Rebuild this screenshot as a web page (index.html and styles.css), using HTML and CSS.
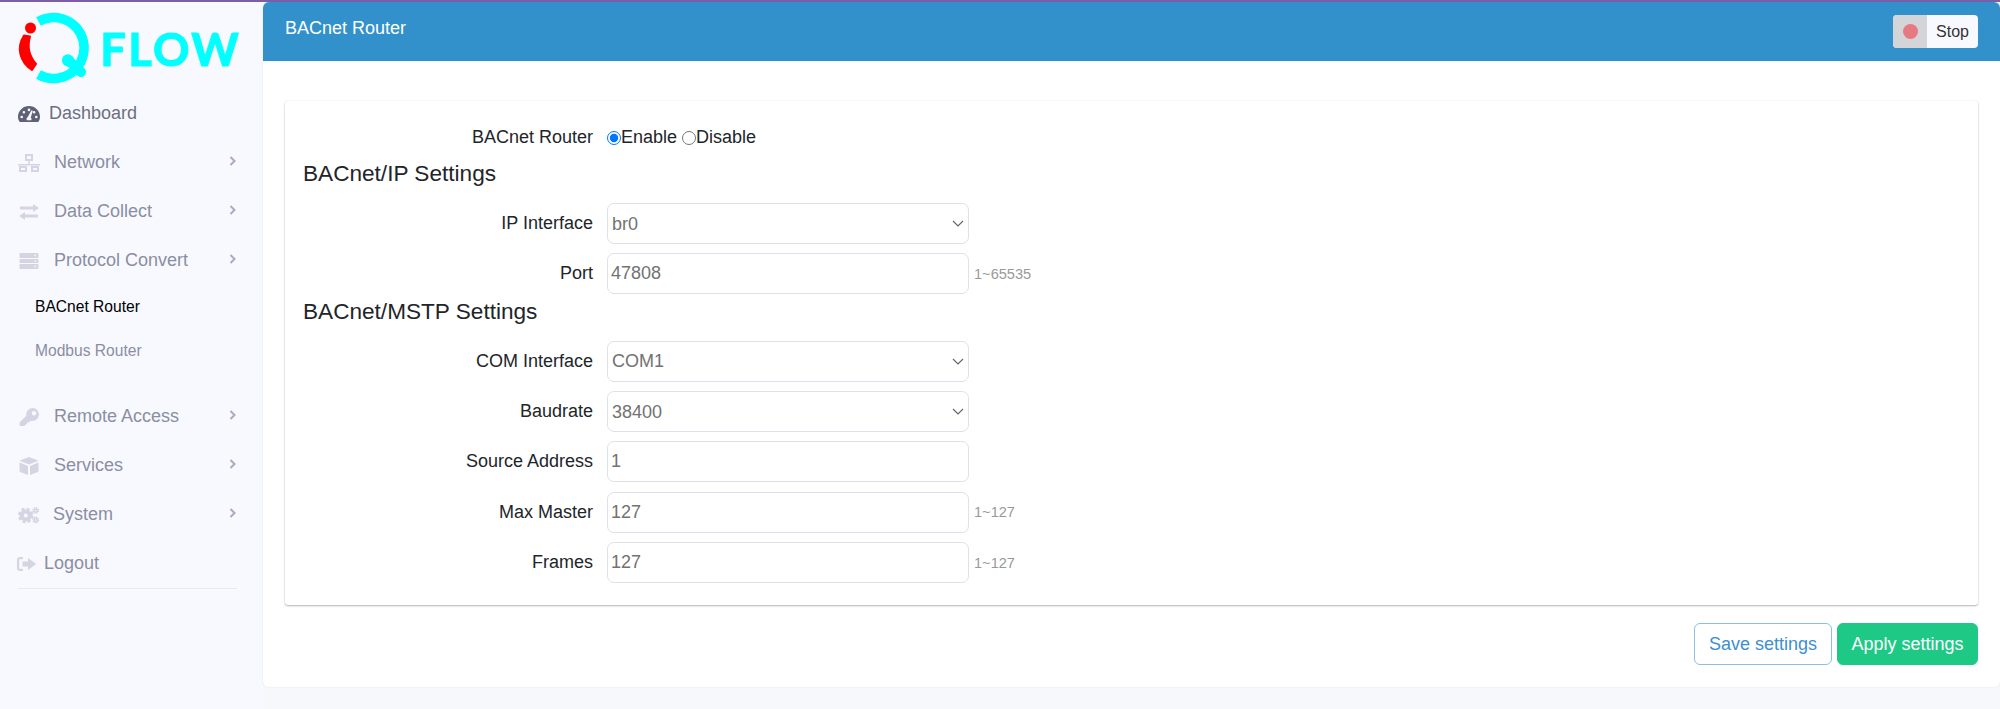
FILE: index.html
```html
<!DOCTYPE html>
<html lang="en">
<head>
<meta charset="utf-8">
<title>BACnet Router</title>
<link rel="stylesheet" href="styles.css">
</head>
<body>
<div class="app">
  <aside class="sidebar">
    <div class="logo">
      <svg width="250" height="87" viewBox="0 0 250 87" class="logo-svg">
        <path class="q" d="M38.500 19.500 A 30.500 30.500 0 1 1 38.500 72.500"/>
        <path class="q-tail" d="M67.500 57.500 L81 70"/>
        <circle class="q-knob" cx="68" cy="58.500" r="6"/>
        <path class="i-arc" d="M24 33.500 C 16 46 20 60 32 68 L 36 62 C 29 54 27 45 30 34.500 Z"/>
        <circle class="i-dot" cx="30.500" cy="26" r="5.500"/>
        <text class="flow" x="100" y="63.500">FLOW</text>
      </svg>
    </div>
    <nav class="nav">
      <a class="nav-item nav-dash">
        <svg class="ic ic-dash" viewBox="0 0 22 16"><path fill-rule="evenodd" d="M11 0C5 0 0 4.800 0 10.800c0 1.700.5 3.300 1.300 4.700.2.300.5.500.9.500h17.600c.4 0 .7-.2.900-.5.800-1.400 1.300-3 1.300-4.700C22 4.800 17 0 11 0zm0 2.600a1.300 1.300 0 1 1 0 2.600 1.300 1.300 0 0 1 0-2.600zM3.700 12.300a1.300 1.300 0 1 1 0-2.600 1.300 1.300 0 0 1 0 2.600zm2.200-4.800a1.300 1.300 0 1 1 0-2.600 1.300 1.300 0 0 1 0 2.600zm7.300 6.800H8.800a2.500 2.500 0 0 1 .9-3.300l3.500-6.200a.8.800 0 0 1 1.400.8l-1.800 5.800c.7.600 1 1.900.4 2.900zm2.900-6.800a1.300 1.300 0 1 1 0-2.600 1.300 1.300 0 0 1 0 2.600zm2.200 4.800a1.300 1.300 0 1 1 0-2.600 1.300 1.300 0 0 1 0 2.600z"/></svg>
        <span>Dashboard</span>
      </a>
      <a class="nav-item">
        <svg class="ic" viewBox="0 0 22 18"><path fill-rule="evenodd" d="M7 0h8v7H7zM9 2v3h4V2zM10.300 7h1.400v3H22v1.400H0V10h10.300zM1 12h8v6H1zM3 14v2h4v-2zM13 12h8v6h-8zM15 14v2h4v-2z"/></svg>
        <span class="label">Network</span>
        <svg class="chev" viewBox="0 0 8 10"><path d="M1.500 1l4 4-4 4"/></svg>
      </a>
      <a class="nav-item">
        <svg class="ic" viewBox="0 0 22 18"><path d="M2 3.500h13V1l6 4-6 4V6.500H2zM20 11.500H7V9l-6 4 6 4v-2.500h13z"/></svg>
        <span class="label">Data Collect</span>
        <svg class="chev" viewBox="0 0 8 10"><path d="M1.500 1l4 4-4 4"/></svg>
      </a>
      <a class="nav-item">
        <svg class="ic" viewBox="0 0 22 18"><path fill-rule="evenodd" d="M2.500 1h17a1 1 0 0 1 1 1v3a1 1 0 0 1-1 1h-17a1 1 0 0 1-1-1V2a1 1 0 0 1 1-1zm14 1.800v1.400h1.500V2.800zM2.500 7h17a1 1 0 0 1 1 1v2a1 1 0 0 1-1 1h-17a1 1 0 0 1-1-1V8a1 1 0 0 1 1-1zm14 1.300v1.400h1.500V8.300zM2.500 12h17a1 1 0 0 1 1 1v3a1 1 0 0 1-1 1h-17a1 1 0 0 1-1-1v-3a1 1 0 0 1 1-1zm14 1.800v1.400h1.500v-1.400z"/></svg>
        <span class="label">Protocol Convert</span>
        <svg class="chev" viewBox="0 0 8 10"><path d="M1.500 1l4 4-4 4"/></svg>
      </a>
      <div class="sub">
        <a class="sub-item active">BACnet Router</a>
        <a class="sub-item">Modbus Router</a>
      </div>
      <a class="nav-item">
        <svg class="ic" viewBox="0 0 22 18"><path fill-rule="evenodd" d="M14.500 0a6.500 6.500 0 1 1-2 12.700L11 14.500H9V16.500H7v1.500H2.500a1 1 0 0 1-1-1v-2.500L8.300 7.700A6.500 6.500 0 0 1 14.500 0zm1.500 3a2.200 2.200 0 1 0 0 4.400A2.200 2.200 0 0 0 16 3z"/></svg>
        <span class="label">Remote Access</span>
        <svg class="chev" viewBox="0 0 8 10"><path d="M1.500 1l4 4-4 4"/></svg>
      </a>
      <a class="nav-item">
        <svg class="ic" viewBox="0 0 22 18"><path d="M11 0l8.500 3.300a1 1 0 0 1 .5.600L11 7.500 2 3.900a1 1 0 0 1 .5-.6zM1.500 5.500l8.500 3.500v9L2.200 15a1 1 0 0 1-.7-.9zM20.500 5.500v8.600a1 1 0 0 1-.7.9L12 18V9z"/></svg>
        <span class="label">Services</span>
        <svg class="chev" viewBox="0 0 8 10"><path d="M1.500 1l4 4-4 4"/></svg>
      </a>
      <a class="nav-item">
        <svg class="ic ic-wide" viewBox="0 0 24 20"><circle class="gear-core" cx="9" cy="10.500" r="4.500"/><circle class="gear" cx="9" cy="10.500" r="7.200"/><circle class="gear-s-core" cx="20" cy="5" r="1.800"/><circle class="gear-s" cx="20" cy="5" r="3.100"/><circle class="gear-s-core" cx="20" cy="15.500" r="1.800"/><circle class="gear-s" cx="20" cy="15.500" r="3.100"/></svg>
        <span class="label">System</span>
        <svg class="chev" viewBox="0 0 8 10"><path d="M1.500 1l4 4-4 4"/></svg>
      </a>
      <a class="nav-item nav-logout">
        <svg class="ic ic-out" viewBox="0 0 19 16"><path d="M6 1v2.300H3a.8.800 0 0 0-.8.800v7.800c0 .4.400.8.800.8h3V15H3a3 3 0 0 1-3-3V4a3 3 0 0 1 3-3zM11 2l7.500 5.400a.8.800 0 0 1 0 1.200L11 14v-3.500H5.500v-5H11z"/></svg>
        <span>Logout</span>
      </a>
    </nav>
    <div class="nav-rule"></div>
  </aside>

  <main class="panel">
    <header class="topbar">
      <h1 class="title">BACnet Router</h1>
      <button class="stop" type="button">
        <span class="stop-light"><span class="dot"></span></span>
        <span class="stop-text">Stop</span>
      </button>
    </header>
    <div class="content">
      <form class="card">
        <div class="row row-radio">
          <label class="lbl">BACnet Router</label>
          <div class="radios">
            <label class="radio"><input type="radio" name="r" checked>Enable</label>
            <label class="radio"><input type="radio" name="r">Disable</label>
          </div>
        </div>
        <h2 class="section s1">BACnet/IP Settings</h2>
        <div class="row">
          <label class="lbl">IP Interface</label>
          <select class="field"><option>br0</option></select>
        </div>
        <div class="row">
          <label class="lbl">Port</label>
          <input class="field" value="47808">
          <span class="hint">1~65535</span>
        </div>
        <h2 class="section s2">BACnet/MSTP Settings</h2>
        <div class="row">
          <label class="lbl">COM Interface</label>
          <select class="field"><option>COM1</option></select>
        </div>
        <div class="row">
          <label class="lbl">Baudrate</label>
          <select class="field"><option>38400</option></select>
        </div>
        <div class="row">
          <label class="lbl">Source Address</label>
          <input class="field" value="1">
        </div>
        <div class="row">
          <label class="lbl">Max Master</label>
          <input class="field" value="127">
          <span class="hint">1~127</span>
        </div>
        <div class="row">
          <label class="lbl">Frames</label>
          <input class="field" value="127">
          <span class="hint">1~127</span>
        </div>
      </form>
      <div class="actions">
        <button class="btn btn-save" type="button">Save settings</button>
        <button class="btn btn-apply" type="button">Apply settings</button>
      </div>
    </div>
  </main>
</div>
</body>
</html>
```
FILE: styles.css
```css
* { box-sizing: border-box; }
html, body { margin: 0; height: 100%; }
body {
  font-family: "Liberation Sans", Arial, sans-serif;
  font-size: 18px;
  color: #212529;
  background: #f7f8fc;
  border-top: 2px solid #7b5ea7;
  overflow: hidden;
}
.app { display: flex; height: 707px; }

.sidebar { width: 263px; flex: none; padding-left: 18px; background: #f8f9fe; }
.logo { height: 87px; margin-left: -18px; }
.logo-svg { display: block; }
.q { fill: none; stroke: #00ffff; stroke-width: 9.500; }
.q-tail { stroke: #00ffff; stroke-width: 10; stroke-linecap: round; }
.q-knob { fill: #00ffff; }
.i-arc { fill: #ff0000; stroke: #ff0000; stroke-width: 2; stroke-linejoin: round; }
.i-dot { fill: #ff0000; }
.flow {
  font-family: "Lato", sans-serif;
  font-weight: 700;
  font-size: 45px;
  letter-spacing: 2.500px;
  fill: #00ffff;
  stroke: #00ffff;
  stroke-width: 1.200px;
  stroke-linejoin: round;
}

.nav { display: flex; flex-direction: column; }
.nav-item {
  display: flex;
  align-items: center;
  height: 49px;
  color: #8a8ea3;
  width: 219px;
}
.ic { width: 22px; height: 18px; flex: none; fill: #d3d5e3; margin-right: 14px; }
.ic-wide { width: 23px; margin-right: 13px; margin-left: -1px; }
.gear-core { fill: none; stroke: #d3d5e3; stroke-width: 4.500; }
.gear { fill: none; stroke: #d3d5e3; stroke-width: 3; stroke-dasharray: 3.400 2.250; }
.gear-s-core { fill: none; stroke: #d3d5e3; stroke-width: 1.800; }
.gear-s { fill: none; stroke: #d3d5e3; stroke-width: 1.500; stroke-dasharray: 1.400 1.030; }
.label { flex: 1; }
.chev { width: 8px; height: 10px; fill: none; stroke: #a9abc0; stroke-width: 2; margin-top: -4px; }
.nav-dash { color: #6b6f82; }
.ic-dash { fill: #5f6274; height: 16px; margin-right: 9px; margin-left: 0; }
.ic-out { width: 19px; height: 16px; margin-right: 8px; margin-left: -1px; }
.sub { display: flex; flex-direction: column; padding: 0 0 19px 17px; }
.sub-item { height: 44px; line-height: 44px; font-size: 15.600px; color: #8a8ea3; }
.active { color: #000; }
.nav-rule { width: 219px; border-top: 1px solid #e8e9f1; }

.panel {
  flex: 1;
  height: 685px;
  background: #fff;
  border-radius: 6px;
  box-shadow: 0 0 2px #e0e3ec;
  display: flex;
  flex-direction: column;
}
.topbar {
  height: 59px;
  flex: none;
  background: #3291cb;
  border-bottom: 1px solid #2b8fd3;
  border-radius: 6px 6px 0 0;
  padding: 13px 22px 0;
  display: flex;
  justify-content: space-between;
  align-items: flex-start;
}
.title { margin: 0; font-weight: 400; font-size: 18px; line-height: 27px; color: #fff; }
.stop {
  display: flex;
  height: 33px;
  width: 85px;
  padding: 0;
  border: 0;
  border-radius: 4px;
  overflow: hidden;
  background: #f8f9fe;
  font: 16px "Liberation Sans", Arial, sans-serif;
  color: #333;
}
.stop-light { width: 34px; height: 100%; background: #d3d5d8; display: flex; align-items: center; justify-content: center; }
.dot { width: 15px; height: 15px; border-radius: 50%; background: #e67a80; }
.stop-text { flex: 1; line-height: 33px; text-align: center; }

.content { padding: 40px 22px 0; flex: 1; display: flex; flex-direction: column; }
.card {
  height: 504px;
  padding: 16px 0 0 18px;
  background: #fff;
  border-radius: 3px;
  box-shadow: 0 1px 2px rgba(0,0,0,.28), 0 0 2px rgba(0,0,0,.08);
}
.row { display: flex; align-items: center; height: 41px; margin-bottom: 9.300px; }
.row-radio { margin-bottom: 0; }
.lbl { width: 304px; text-align: right; padding-right: 14px; flex: none; color: #212529; }
.radios { display: flex; }
.radio { display: flex; align-items: center; color: #212529; margin-right: 5px; }
.radio input { width: 14px; height: 14px; margin: 0; }
.field {
  width: 362px;
  height: 41px;
  padding: 0 3px;
  border: 1px solid #dfe1ea;
  border-radius: 7px;
  background-color: #fff;
  font: 18px "Liberation Sans", Arial, sans-serif;
  color: #727272;
  outline: none;
}
select.field {
  appearance: none;
  padding: 0 4px;
  background-image: url("data:image/svg+xml,%3Csvg xmlns='http://www.w3.org/2000/svg' width='12' height='7' viewBox='0 0 12 7'%3E%3Cpath d='M1 1l5 5 5-5' fill='none' stroke='%23666' stroke-width='1.200'/%3E%3C/svg%3E");
  background-repeat: no-repeat;
  background-position: right 4px center;
}
.hint { margin-left: 5px; font-size: 14.600px; color: #999; }
.section { margin: 0; font-weight: 400; font-size: 22.600px; color: #212529; line-height: 27px; }
.s1 { margin: 2px 0 16px; }
.s2 { margin: -6px 0 16.300px; }
.actions { display: flex; justify-content: flex-end; gap: 5px; margin-top: 18px; }
.btn {
  height: 42px;
  border-radius: 6px;
  font: 18px "Liberation Sans", Arial, sans-serif;
  padding: 0;
}
.btn-save { width: 138px; background: #fff; border: 1px solid #8bbfe4; color: #3d8fd1; }
.btn-apply { width: 141px; background: #1dc985; border: 1px solid #1dc985; color: #fff; }
```
